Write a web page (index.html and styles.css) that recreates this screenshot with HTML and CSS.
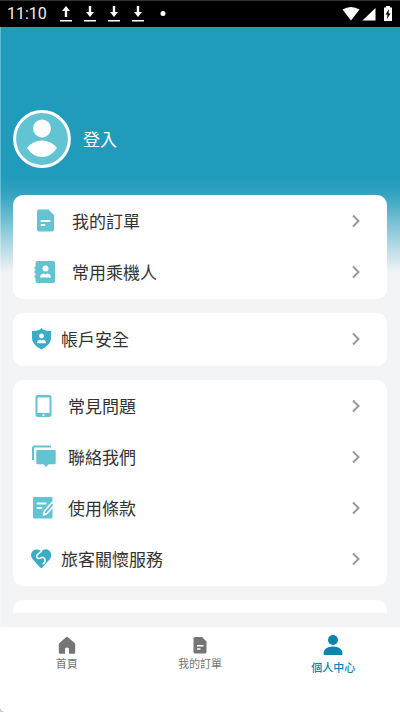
FILE: index.html
```html
<!DOCTYPE html>
<html lang="zh-Hant">
<head>
<meta charset="utf-8">
<meta name="viewport" content="width=device-width, initial-scale=1">
<title>個人中心</title>
<link rel="stylesheet" href="styles.css">
</head>
<body>
<div class="app">
  <header class="status">
    <span class="time">11:10</span>
    <svg width="14" height="18" viewBox="0 0 14 18"><path d="M7 1l4 5H8.200v6H5.800V6H3z"/><path d="M1 15h12v1.500H1z"/></svg>
    <svg width="14" height="18" viewBox="0 0 14 18"><path d="M7 12l4-5H8.200V1H5.800v6H3z"/><path d="M1 15h12v1.500H1z"/></svg>
    <svg width="14" height="18" viewBox="0 0 14 18"><path d="M7 12l4-5H8.200V1H5.800v6H3z"/><path d="M1 15h12v1.500H1z"/></svg>
    <svg width="14" height="18" viewBox="0 0 14 18"><path d="M7 12l4-5H8.200V1H5.800v6H3z"/><path d="M1 15h12v1.500H1z"/></svg>
    <svg width="14" height="18" viewBox="0 0 14 18"><circle cx="8" cy="8.500" r="2.500"/></svg>
    <svg class="system" width="52" height="18" viewBox="0 0 52 18"><path d="M1.500 4.500Q10 -.5 18.500 4.500L10 15.500z"/><path d="M21.500 15.500L34.500 3v12.500z"/><path d="M43 2.500h2V1h4v1.500h2V16h-8z"/><path class="bolt" d="M48 4l-3.500 5.500h2L46 14l3.500-5.500h-2z"/></svg>
  </header>

  <main class="page">
    <a class="profile" href="#login">
      <svg class="avatar" width="58" height="58" viewBox="0 0 58 58"><circle cx="29" cy="29" r="27.400" fill="#62c3d3" stroke="#fff" stroke-width="3"/><circle cx="29" cy="18.500" r="9" fill="#fff"/><path d="M14 38Q20 30.500 29 30.500T44 38Q38 47 29 47T14 38z" fill="#fff"/></svg>
      <span>登入</span>
    </a>

    <nav class="cards" aria-label="會員功能">
      <section class="card">
        <a class="row" href="#orders">
          <svg width="42" height="26" viewBox="0 0 42 26"><path class="light" d="M9 1.500h9.500L24 7v14.500a2 2 0 0 1-2 2H9a2 2 0 0 1-2-2v-18a2 2 0 0 1 2-2z"/><path class="cut" d="M11.500 13h8M11.500 17h3"/></svg>
          <span>我的訂單</span>
          <svg class="chevron" width="8" height="14" viewBox="0 0 8 14"><path d="M1 1.500L6.500 7 1 12.500"/></svg>
        </a>
        <a class="row" href="#passengers">
          <svg width="42" height="26" viewBox="0 0 42 26"><rect class="light" x="5.500" y="2" width="19.500" height="22" rx="2"/><path d="M4.500 9h2M4.500 13h2M4.500 17.500h2" stroke="#62c3d3" stroke-width="2.400"/><circle cx="15.500" cy="9.500" r="3" fill="#fff"/><path d="M10 18.500q0-3.500 4-4l1.500 1 1.500-1q4 .5 4 4z" fill="#fff"/></svg>
          <span>常用乘機人</span>
          <svg class="chevron" width="8" height="14" viewBox="0 0 8 14"><path d="M1 1.500L6.500 7 1 12.500"/></svg>
        </a>
      </section>

      <section class="card">
        <a class="row" href="#security">
          <svg width="31" height="26" viewBox="0 0 31 26"><path class="dark" d="M11.500 2l1.500 1.500Q16 5 21 5v7c0 5-4 8.500-9.500 11.500C6 20.500 2 17 2 12V5q5 0 8-1.500z"/><circle cx="11.500" cy="10" r="2.400" fill="#fff"/><path d="M7 17.200q0-3.200 3.200-3.500l1.300.7 1.300-.7q3.200.3 3.200 3.500z" fill="#fff"/></svg>
          <span>帳戶安全</span>
          <svg class="chevron" width="8" height="14" viewBox="0 0 8 14"><path d="M1 1.500L6.500 7 1 12.500"/></svg>
        </a>
      </section>

      <section class="card">
        <a class="row" href="#faq">
          <svg width="38" height="26" viewBox="0 0 38 26"><rect class="light" x="5.500" y="2" width="16" height="22" rx="2.500"/><rect x="7.500" y="4.500" width="12" height="15.500" fill="#fff"/><circle cx="13.500" cy="22" r="1.100" fill="#fff"/></svg>
          <span>常見問題</span>
          <svg class="chevron" width="8" height="14" viewBox="0 0 8 14"><path d="M1 1.500L6.500 7 1 12.500"/></svg>
        </a>
        <a class="row" href="#contact">
          <svg width="38" height="26" viewBox="0 0 38 26"><path d="M3 16V4a1.500 1.500 0 0 1 1.500-1.500H21" fill="none" stroke="#62c3d3" stroke-width="2"/><path class="light" d="M7.500 6h17a1.200 1.200 0 0 1 1.200 1.200V19a1.200 1.200 0 0 1-1.200 1.200h-6L16 23l-2.500-2.800h-6A1.200 1.200 0 0 1 6.300 19V7.200A1.200 1.200 0 0 1 7.500 6z"/></svg>
          <span>聯絡我們</span>
          <svg class="chevron" width="8" height="14" viewBox="0 0 8 14"><path d="M1 1.500L6.500 7 1 12.500"/></svg>
        </a>
        <a class="row" href="#terms">
          <svg width="38" height="26" viewBox="0 0 38 26"><path class="light" d="M4 2h17.500a1 1 0 0 1 1 1v19.500a1 1 0 0 1-1 1H4a1 1 0 0 1-1-1V3a1 1 0 0 1 1-1z"/><path class="cut" d="M7.500 8.500h8M7.500 13h4"/><path d="M13.500 20l1-4 7.500-8.500 2.500 2.500-7.500 8.500z" fill="#62c3d3" stroke="#fff" stroke-width="1.600" stroke-linejoin="round"/></svg>
          <span>使用條款</span>
          <svg class="chevron" width="8" height="14" viewBox="0 0 8 14"><path d="M1 1.500L6.500 7 1 12.500"/></svg>
        </a>
        <a class="row" href="#care">
          <svg width="31" height="26" viewBox="0 0 31 26"><path class="dark" d="M11.500 5.500C13.500 3 17 2.500 19.500 5s2.200 6 0 8.500l-6.800 7.800a2 2 0 0 1-2.800 0L2.500 13C.5 10.500.5 7.500 2.500 5.200s6-2.200 9 .3z"/><path d="M11.500 5.200L7.500 8.500Q5.500 11 8 12.300q2 .7 4-1 2.500.2 3 2.500t-2 4" fill="none" stroke="#fff" stroke-width="1.500" stroke-linecap="round"/></svg>
          <span>旅客關懷服務</span>
          <svg class="chevron" width="8" height="14" viewBox="0 0 8 14"><path d="M1 1.500L6.500 7 1 12.500"/></svg>
        </a>
      </section>

      <section class="card card-next"></section>
    </nav>
  </main>

  <nav class="tabs" aria-label="主選單">
    <a class="tab" href="#home">
      <svg width="20" height="20" viewBox="0 0 20 20"><path d="M10 1.500l7.300 6.200q.9.800.9 1.800v8a1.200 1.200 0 0 1-1.200 1.200h-5v-4.700q0-1.500-2-1.500t-2 1.500v4.700H3a1.200 1.200 0 0 1-1.200-1.200v-8q0-1 .9-1.800z"/></svg>
      <span>首頁</span>
    </a>
    <a class="tab" href="#orders">
      <svg width="20" height="20" viewBox="0 0 20 20"><path d="M5 2h7l4.500 4.500V17a1.500 1.500 0 0 1-1.500 1.500H5A1.500 1.500 0 0 1 3.500 17V3.500A1.500 1.500 0 0 1 5 2z"/><path d="M7 10.700h6.500M7 14h3.500" stroke="#fff" stroke-width="1.500"/></svg>
      <span>我的訂單</span>
    </a>
    <a class="tab active" href="#me" aria-current="page">
      <svg width="22" height="24" viewBox="0 0 22 24"><circle cx="11" cy="5" r="5"/><path d="M1.500 19Q1.500 11.500 11 11.500t9.500 7.500q0 1-1 1h-17q-1 0-1-1z"/></svg>
      <span>個人中心</span>
    </a>
  </nav>
</div>
</body>
</html>
```
FILE: styles.css
```css
* {
  box-sizing: border-box;
}

body {
  margin: 0;
  background: #ccc;
  color: #333;
  font-family: "Noto Sans CJK TC", sans-serif;
  font-size: 17px;
  line-height: 24px;
}

a {
  color: inherit;
  text-decoration: none;
}

svg {
  display: block;
  flex: none;
}

.app {
  display: flex;
  flex-direction: column;
  height: 100vh;
  overflow: hidden;
  background: #fff;
  border-bottom-left-radius: 5px;
}

.status {
  display: flex;
  align-items: center;
  gap: 10px;
  height: 27px;
  padding: 0 7px;
  border-top: 1px solid #333;
  background: #000;
  color: #eee;
  fill: #fff;
}

.time {
  width: 42px;
  font-family: Roboto, sans-serif;
  font-size: 16px;
}

.system {
  margin-left: auto;
}

.bolt {
  fill: #000;
}

.page {
  display: flex;
  flex: 1;
  flex-direction: column;
  min-height: 0;
  padding: 83px 13px 14px 12px;
  border-left: 1px solid rgba(255, 255, 255, 0.3);
  background: linear-gradient(#219bbb 150px, #33a4c1 168px, #9dd0df 210px, #f3f4f6 246px);
}

.profile {
  display: flex;
  align-items: center;
  gap: 12px;
  margin-bottom: 27px;
  color: #fff;
}

.cards {
  display: flex;
  flex: 1;
  flex-direction: column;
  gap: 14px;
  min-height: 0;
  overflow: hidden;
}

.card {
  flex: none;
  padding-bottom: 2px;
  border-radius: 10px;
  background: #fff;
}

.card-next {
  flex: 1;
  border-radius: 10px 10px 0 0;
}

.row {
  display: flex;
  align-items: center;
  height: 51px;
  padding: 0 27px 0 17px;
}

.chevron {
  margin-left: auto;
  fill: none;
  stroke: #999;
  stroke-width: 2;
}

.light {
  fill: #62c3d3;
}

.dark {
  fill: #3aacc6;
}

.cut {
  fill: none;
  stroke: #fff;
  stroke-width: 2;
  stroke-linecap: round;
}

.tabs {
  display: grid;
  grid-template-columns: repeat(3, 1fr);
  height: 85px;
  padding-top: 8px;
}

.tab {
  display: flex;
  flex-direction: column;
  align-items: center;
  color: #757575;
  fill: currentColor;
  font-size: 11px;
  line-height: 16px;
}

.active {
  color: #0c85ad;
  font-weight: 500;
}
```
